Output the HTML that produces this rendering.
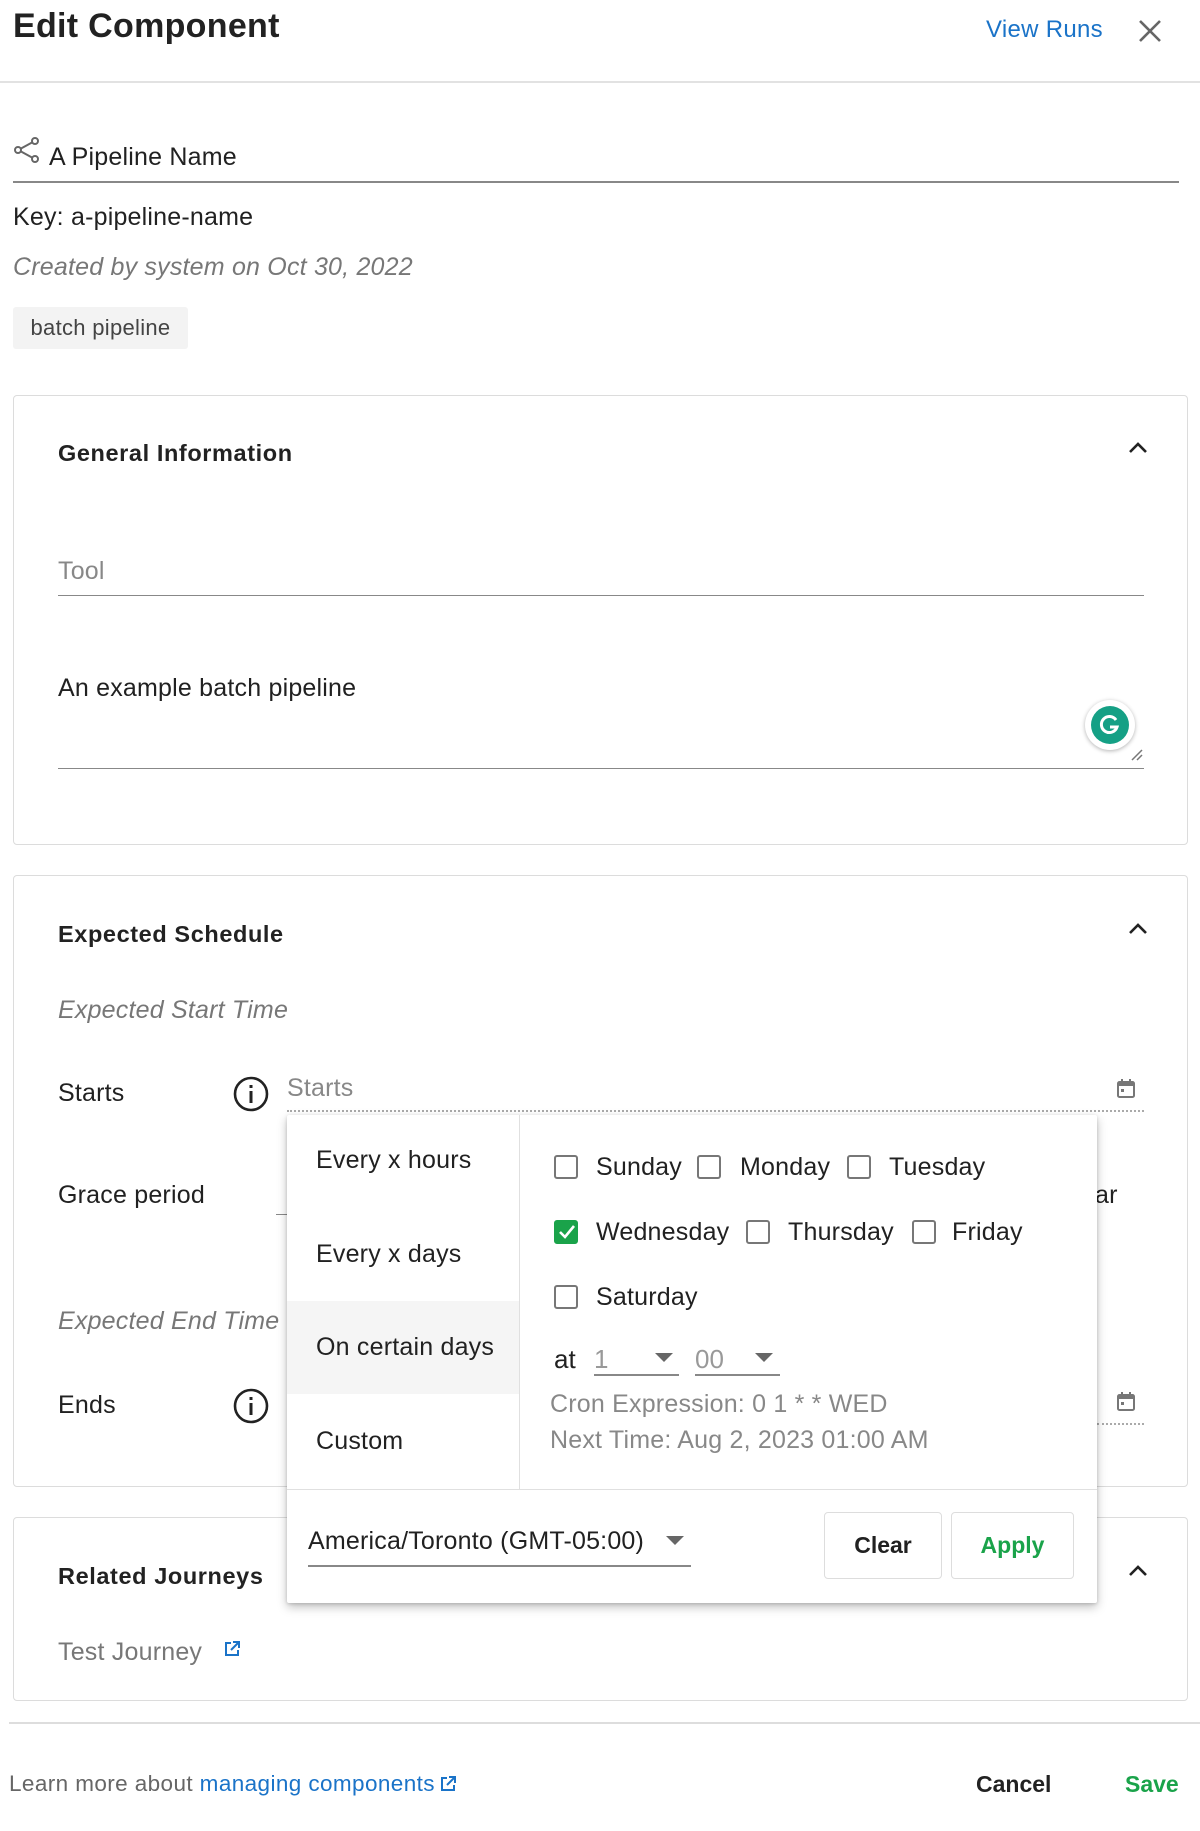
<!DOCTYPE html>
<html><head><meta charset="utf-8"><style>
*{box-sizing:border-box;margin:0;padding:0}
body{width:1200px;height:1831px;position:relative;background:#fff;font-family:"Liberation Sans",Arial,sans-serif;color:#212121;overflow:hidden}
.a{position:absolute;white-space:nowrap}
.t{font-size:25px;letter-spacing:.2px;line-height:28px;transform:translateY(-14px)}
.g{color:#777}
.i{font-style:italic;color:#777}
.b{font-weight:bold;font-size:23.5px;letter-spacing:.6px;line-height:28px;transform:translateY(-14px);color:#222}
.card{position:absolute;left:13px;width:1175px;border:1px solid #dcdcdc;border-radius:4px;background:#fff}
.line{position:absolute;height:1px;background:#888}
.dot{position:absolute;border-top:2px dotted #aaa;height:0}
.cb{position:absolute;width:24px;height:24px;border:2.5px solid #777;border-radius:3px;transform:translateY(-12px)}
.chev{position:absolute}
</style></head><body>

<div class="a" style="left:13px;top:6px;font-size:34px;letter-spacing:.3px;line-height:40px;font-weight:bold;color:#222">Edit Component</div>
<div class="a" style="left:986px;top:16px;font-size:24px;letter-spacing:.3px;line-height:28px;color:#1a73c8">View Runs</div>
<svg class="a" style="left:1137px;top:18px" width="26" height="26" viewBox="0 0 26 26"><path d="M3 3L23 23M23 3L3 23" stroke="#666" stroke-width="2.6"/></svg>
<div class="line" style="left:0;top:81px;width:1200px;background:#e2e2e2;height:2px"></div>

<svg class="a" style="left:13px;top:136px" width="28" height="28" viewBox="0 0 28 28" fill="none" stroke="#666" stroke-width="2"><circle cx="22" cy="5" r="3"/><circle cx="5" cy="14" r="3"/><circle cx="22" cy="23" r="3"/><path d="M8 12.5L19 6.5M8 15.5L19 21.5"/></svg>
<div class="a t" style="left:49px;top:157px">A Pipeline Name</div>
<div class="line" style="left:13px;top:181px;width:1166px;height:2px;background:#888"></div>
<div class="a t" style="left:13px;top:217px">Key: a-pipeline-name</div>
<div class="a t i" style="left:13px;top:267px">Created by system on Oct 30, 2022</div>
<div class="a" style="left:13px;top:307px;width:175px;height:42px;background:#f3f3f3;border-radius:3px;font-size:22px;letter-spacing:.3px;line-height:42px;text-align:center;color:#444">batch pipeline</div>

<div class="card" style="top:395px;height:450px"></div>
<div class="a b" style="left:58px;top:453px">General Information</div>
<svg class="chev" style="left:1126px;top:440px" width="24" height="16" viewBox="0 0 24 16"><path d="M4 12L12 4L20 12" stroke="#222" stroke-width="2.6" fill="none"/></svg>
<div class="a t g" style="left:58px;top:571px;color:#888">Tool</div>
<div class="line" style="left:58px;top:595px;width:1086px"></div>
<div class="a t" style="left:58px;top:688px">An example batch pipeline</div>
<div class="a" style="left:1085px;top:700px;width:50px;height:50px;border-radius:50%;background:#fff;box-shadow:0 1px 4px rgba(0,0,0,.3)"></div>
<div class="a" style="left:1091px;top:706px;width:38px;height:38px;border-radius:50%;background:#15a085"></div>
<svg class="a" style="left:1097px;top:712px" width="26" height="26" viewBox="0 0 26 26"><path d="M19 8A8 8 0 1 0 20 15H13" stroke="#fff" stroke-width="3" fill="none"/></svg>
<svg class="a" style="left:1130px;top:748px" width="14" height="14"><path d="M2 12L12 2M7 12L12 7" stroke="#777" stroke-width="1.5"/></svg>
<div class="line" style="left:58px;top:768px;width:1086px"></div>

<div class="card" style="top:875px;height:612px"></div>
<div class="a b" style="left:58px;top:934px">Expected Schedule</div>
<svg class="chev" style="left:1126px;top:921px" width="24" height="16" viewBox="0 0 24 16"><path d="M4 12L12 4L20 12" stroke="#222" stroke-width="2.6" fill="none"/></svg>
<div class="a t i" style="left:58px;top:1010px">Expected Start Time</div>
<div class="a t" style="left:58px;top:1093px">Starts</div>
<svg class="a" style="left:232px;top:1075px" width="38" height="38" viewBox="0 0 38 38"><circle cx="19" cy="19" r="16" stroke="#222" stroke-width="2.6" fill="none"/><rect x="17.5" y="16" width="3" height="12" fill="#222"/><rect x="17.5" y="10" width="3" height="3" fill="#222"/></svg>
<div class="a t g" style="left:287px;top:1088px;color:#888">Starts</div>
<svg class="a" style="left:1116px;top:1078px" width="20" height="22" viewBox="0 0 20 22"><rect x="2" y="4" width="16" height="15" rx="1.5" stroke="#777" stroke-width="2" fill="none"/><rect x="2" y="4" width="16" height="4" fill="#777"/><path d="M6 1v5M14 1v5" stroke="#777" stroke-width="2"/><rect x="5" y="11" width="3" height="3" fill="#777"/></svg>
<div class="dot" style="left:287px;top:1110px;width:857px"></div>
<div class="a t" style="left:58px;top:1195px">Grace period</div>
<div class="line" style="left:276px;top:1214px;width:12px"></div>
<div class="a t" style="left:1095px;top:1195px">ar</div>
<div class="a t i" style="left:58px;top:1321px">Expected End Time</div>
<div class="a t" style="left:58px;top:1405px">Ends</div>
<svg class="a" style="left:232px;top:1387px" width="38" height="38" viewBox="0 0 38 38"><circle cx="19" cy="19" r="16" stroke="#222" stroke-width="2.6" fill="none"/><rect x="17.5" y="16" width="3" height="12" fill="#222"/><rect x="17.5" y="10" width="3" height="3" fill="#222"/></svg>
<svg class="a" style="left:1116px;top:1391px" width="20" height="22" viewBox="0 0 20 22"><rect x="2" y="4" width="16" height="15" rx="1.5" stroke="#777" stroke-width="2" fill="none"/><rect x="2" y="4" width="16" height="4" fill="#777"/><path d="M6 1v5M14 1v5" stroke="#777" stroke-width="2"/><rect x="5" y="11" width="3" height="3" fill="#777"/></svg>
<div class="dot" style="left:1097px;top:1423px;width:47px"></div>

<div class="card" style="top:1517px;height:184px"></div>
<div class="a b" style="left:58px;top:1576px">Related Journeys</div>
<svg class="chev" style="left:1126px;top:1563px" width="24" height="16" viewBox="0 0 24 16"><path d="M4 12L12 4L20 12" stroke="#222" stroke-width="2.6" fill="none"/></svg>
<div class="a t g" style="left:58px;top:1652px">Test Journey</div>
<svg class="a" style="left:223px;top:1640px" width="18" height="18" viewBox="0 0 18 18" fill="none" stroke="#1a73c8" stroke-width="2"><path d="M8 3H3V15H15V10M10 2H16V8M16 2L8 10"/></svg>

<div class="line" style="left:9px;top:1722px;width:1191px;background:#ddd;height:2px"></div>
<div class="a" style="left:9px;top:1771px;font-size:22.5px;letter-spacing:.4px;line-height:26px;color:#666">Learn more about <span style="color:#1a73c8">managing components</span></div>
<svg class="a" style="left:439px;top:1775px" width="18" height="18" viewBox="0 0 18 18" fill="none" stroke="#1a73c8" stroke-width="2"><path d="M8 3H3V15H15V10M10 2H16V8M16 2L8 10"/></svg>
<div class="a" style="left:976px;top:1770px;font-size:23px;line-height:28px;font-weight:bold;color:#222">Cancel</div>
<div class="a" style="left:1125px;top:1770px;font-size:23px;line-height:28px;font-weight:bold;color:#1aa34a">Save</div>

<!-- popup -->
<div class="a" style="left:287px;top:1115px;width:810px;height:488px;background:#fff;box-shadow:0 4px 10px rgba(0,0,0,.25),0 1px 3px rgba(0,0,0,.15);border-radius:2px"></div>
<div class="a" style="left:287px;top:1301px;width:232px;height:93px;background:#f5f5f5"></div>
<div class="a" style="left:519px;top:1115px;width:1px;height:374px;background:#e0e0e0"></div>
<div class="a" style="left:287px;top:1489px;width:810px;height:1px;background:#e0e0e0"></div>
<div class="a t" style="left:316px;top:1160px">Every x hours</div>
<div class="a t" style="left:316px;top:1254px">Every x days</div>
<div class="a t" style="left:316px;top:1347px">On certain days</div>
<div class="a t" style="left:316px;top:1441px">Custom</div>

<div class="cb" style="left:554px;top:1167px"></div><div class="a t" style="left:596px;top:1167px">Sunday</div>
<div class="cb" style="left:697px;top:1167px"></div><div class="a t" style="left:740px;top:1167px">Monday</div>
<div class="cb" style="left:847px;top:1167px"></div><div class="a t" style="left:889px;top:1167px">Tuesday</div>
<div class="cb" style="left:554px;top:1232px;background:#1aa34a;border-color:#1aa34a"></div>
<svg class="a" style="left:557px;top:1223px" width="20" height="18"><path d="M3 9L8 14L17 3" stroke="#fff" stroke-width="2.6" fill="none"/></svg>
<div class="a t" style="left:596px;top:1232px">Wednesday</div>
<div class="cb" style="left:746px;top:1232px"></div><div class="a t" style="left:788px;top:1232px">Thursday</div>
<div class="cb" style="left:912px;top:1232px"></div><div class="a t" style="left:952px;top:1232px">Friday</div>
<div class="cb" style="left:554px;top:1297px"></div><div class="a t" style="left:596px;top:1297px">Saturday</div>

<div class="a" style="left:554px;top:1344px;font-size:26px;line-height:30px">at</div>
<div class="a" style="left:594px;top:1344px;font-size:26px;line-height:30px;color:#999">1</div>
<svg class="a" style="left:655px;top:1353px" width="18" height="10"><path d="M0 0H18L9 9Z" fill="#666"/></svg>
<div class="line" style="left:594px;top:1374px;width:85px;height:2px"></div>
<div class="a" style="left:695px;top:1344px;font-size:26px;line-height:30px;color:#999">00</div>
<svg class="a" style="left:755px;top:1353px" width="18" height="10"><path d="M0 0H18L9 9Z" fill="#666"/></svg>
<div class="line" style="left:695px;top:1374px;width:85px;height:2px"></div>
<div class="a t g" style="left:550px;top:1404px;color:#888">Cron Expression: 0 1 * * WED</div>
<div class="a t g" style="left:550px;top:1440px;color:#888">Next Time: Aug 2, 2023 01:00 AM</div>

<div class="a t" style="left:308px;top:1541px">America/Toronto (GMT-05:00)</div>
<svg class="a" style="left:666px;top:1536px" width="18" height="10"><path d="M0 0H18L9 9Z" fill="#666"/></svg>
<div class="line" style="left:308px;top:1565px;width:383px;height:2px"></div>
<div class="a" style="left:824px;top:1512px;width:118px;height:67px;border:1px solid #ddd;border-radius:4px;font-size:23px;font-weight:bold;line-height:65px;text-align:center">Clear</div>
<div class="a" style="left:951px;top:1512px;width:123px;height:67px;border:1px solid #ddd;border-radius:4px;font-size:23px;font-weight:bold;line-height:65px;text-align:center;color:#1aa34a">Apply</div>
</body></html>
